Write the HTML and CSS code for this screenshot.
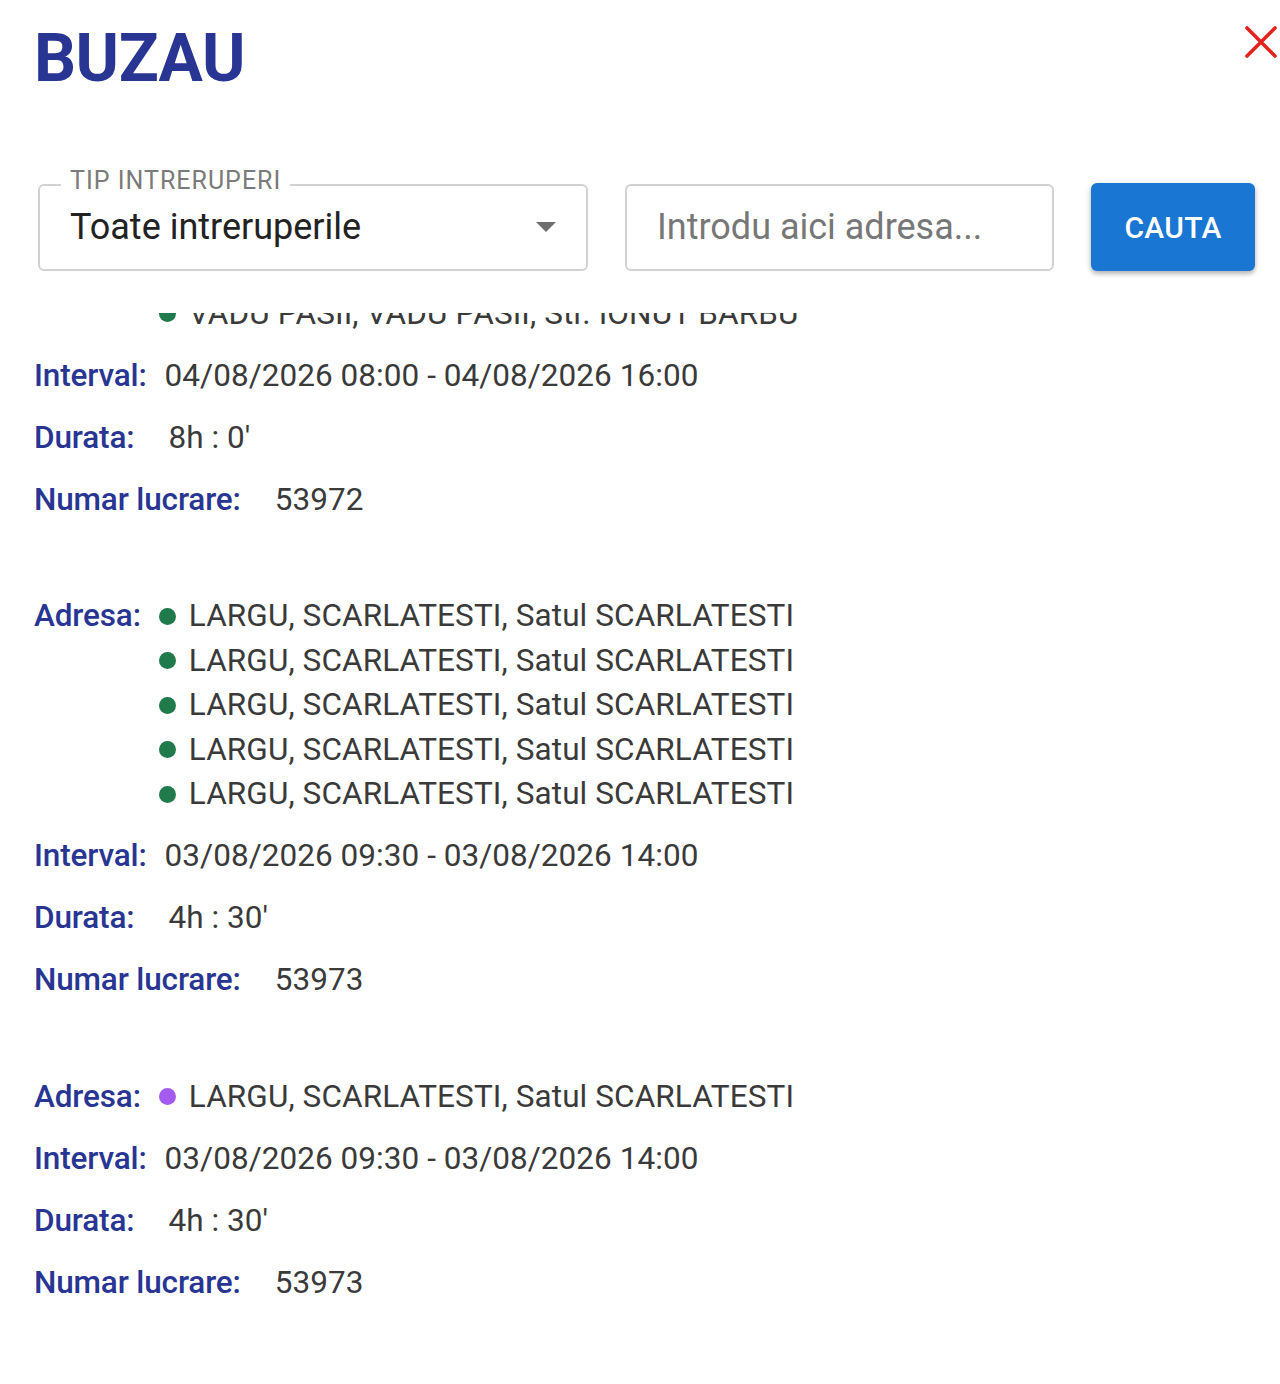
FILE: index.html
```html
<!DOCTYPE html>
<html lang="ro">
<head>
<meta charset="utf-8">
<title>BUZAU</title>
<link rel="stylesheet" href="styles.css">
</head>
<body>
<div class="page">
  <header class="header">
    <h1 class="title">BUZAU</h1>
    <button class="close" aria-label="Inchide">
      <svg width="34" height="34" viewBox="0 0 34 34"><path d="M3 3 L31 31 M31 3 L3 31" stroke="#e3231d" stroke-width="3.6" stroke-linecap="round" fill="none"/></svg>
    </button>
  </header>

  <div class="form-row">
    <div class="select">
      <span class="select-label">TIP INTRERUPERI</span>
      <span class="select-value">Toate intreruperile</span>
      <span class="select-arrow"></span>
    </div>
    <input class="address-input" type="text" placeholder="Introdu aici adresa...">
    <button class="search-btn">CAUTA</button>
  </div>

  <div class="results">
    <div class="results-inner">
      <div class="block">
        <div class="row">
          <span class="label">Adresa:</span>
          <ul class="addr-list">
            <li class="addr"><span class="dot green"></span>VADU PASII, VADU PASII, Str. IONUT BARBU</li>
            <li class="addr"><span class="dot green"></span>VADU PASII, VADU PASII, Str. IONUT BARBU</li>
          </ul>
        </div>
        <div class="row"><span class="label">Interval:</span><span class="value">04/08/2026 08:00 - 04/08/2026 16:00</span></div>
        <div class="row"><span class="label">Durata:</span><span class="value pad">8h : 0'</span></div>
        <div class="row"><span class="label">Numar lucrare:</span><span class="value pad">53972</span></div>
      </div>

      <div class="block">
        <div class="row">
          <span class="label">Adresa:</span>
          <ul class="addr-list">
            <li class="addr"><span class="dot green"></span>LARGU, SCARLATESTI, Satul SCARLATESTI</li>
            <li class="addr"><span class="dot green"></span>LARGU, SCARLATESTI, Satul SCARLATESTI</li>
            <li class="addr"><span class="dot green"></span>LARGU, SCARLATESTI, Satul SCARLATESTI</li>
            <li class="addr"><span class="dot green"></span>LARGU, SCARLATESTI, Satul SCARLATESTI</li>
            <li class="addr"><span class="dot green"></span>LARGU, SCARLATESTI, Satul SCARLATESTI</li>
          </ul>
        </div>
        <div class="row"><span class="label">Interval:</span><span class="value">03/08/2026 09:30 - 03/08/2026 14:00</span></div>
        <div class="row"><span class="label">Durata:</span><span class="value pad">4h : 30'</span></div>
        <div class="row"><span class="label">Numar lucrare:</span><span class="value pad">53973</span></div>
      </div>

      <div class="block">
        <div class="row">
          <span class="label">Adresa:</span>
          <ul class="addr-list">
            <li class="addr"><span class="dot purple"></span>LARGU, SCARLATESTI, Satul SCARLATESTI</li>
          </ul>
        </div>
        <div class="row"><span class="label">Interval:</span><span class="value">03/08/2026 09:30 - 03/08/2026 14:00</span></div>
        <div class="row"><span class="label">Durata:</span><span class="value pad">4h : 30'</span></div>
        <div class="row"><span class="label">Numar lucrare:</span><span class="value pad">53973</span></div>
      </div>
    </div>
  </div>
</div>
</body>
</html>
```

FILE: styles.css
```css
* { box-sizing: border-box; }

html, body {
  margin: 0;
  padding: 0;
  background: #ffffff;
}

body {
  font-family: Roboto, "Liberation Sans", Arial, sans-serif;
  color: #3a3a3a;
}

.page {
  padding: 0 2px 0 34px;
  height: 1384px;
  overflow: hidden;
}

.header {
  display: flex;
  justify-content: space-between;
  align-items: flex-start;
}

.title {
  margin: 0;
  padding-top: 26px;
  font-size: 66px;
  line-height: 1;
  font-weight: 700;
  color: #283593;
  letter-spacing: -0.5px;
}

.close {
  margin-top: 25px;
  padding: 0;
  border: 0;
  background: transparent;
  width: 34px;
  height: 34px;
  cursor: pointer;
}

.close svg { display: block; }

.form-row {
  display: flex;
  align-items: center;
  gap: 37px;
  margin-top: 91px;
  padding-left: 4px;
}

.select {
  position: relative;
  width: 550px;
  height: 87px;
  border: 2px solid #d2d2d2;
  border-radius: 6px;
  display: flex;
  align-items: center;
  padding: 0 30px 0 30px;
}

.select-label {
  position: absolute;
  top: -19px;
  left: 21px;
  padding: 0 9px;
  background: #ffffff;
  font-size: 25px;
  line-height: 28px;
  color: #7a7a7a;
  letter-spacing: 1px;
}

.select-value {
  flex: 1;
  font-size: 36px;
  color: #222222;
}

.select-arrow {
  width: 0;
  height: 0;
  border-left: 10px solid transparent;
  border-right: 10px solid transparent;
  border-top: 10px solid #6f6f6f;
}

.address-input {
  width: 429px;
  height: 87px;
  border: 2px solid #d2d2d2;
  border-radius: 6px;
  padding: 0 30px;
  font-family: Roboto, "Liberation Sans", Arial, sans-serif;
  font-size: 36px;
  color: #222222;
  outline: none;
}

.address-input::placeholder {
  color: #777777;
  opacity: 1;
}

.search-btn {
  width: 164px;
  height: 88px;
  border: 0;
  border-radius: 6px;
  background: #1976d2;
  color: #ffffff;
  font-family: Roboto, "Liberation Sans", Arial, sans-serif;
  font-size: 30px;
  font-weight: 500;
  letter-spacing: 0.3px;
  box-shadow: 0 3px 4px rgba(0, 0, 0, 0.22), 0 1px 8px rgba(0, 0, 0, 0.12);
  cursor: pointer;
}

.results {
  margin-top: 42px;
  height: 1072px;
  overflow: hidden;
}

.results-inner {
  margin-top: -83.5px;
}

.block {
  margin-bottom: 72px;
}

.row {
  display: flex;
  align-items: flex-start;
  margin-top: 17.5px;
  line-height: 44.5px;
  font-size: 31.5px;
}

.label {
  font-weight: 500;
  color: #283593;
  margin-right: 18px;
  letter-spacing: -0.15px;
}

.value {
  color: #3a3a3a;
  letter-spacing: 0.05px;
}

.value.pad {
  padding-left: 16px;
}

.addr-list {
  list-style: none;
  margin: 0;
  padding: 0;
}

.addr {
  display: flex;
  align-items: center;
  gap: 13px;
  color: #3a3a3a;
  letter-spacing: 0.1px;
}

.dot {
  width: 17px;
  height: 17px;
  border-radius: 50%;
  flex: none;
}

.dot.green { background: #1f7a4c; }
.dot.purple { background: #a45cf0; }
```
